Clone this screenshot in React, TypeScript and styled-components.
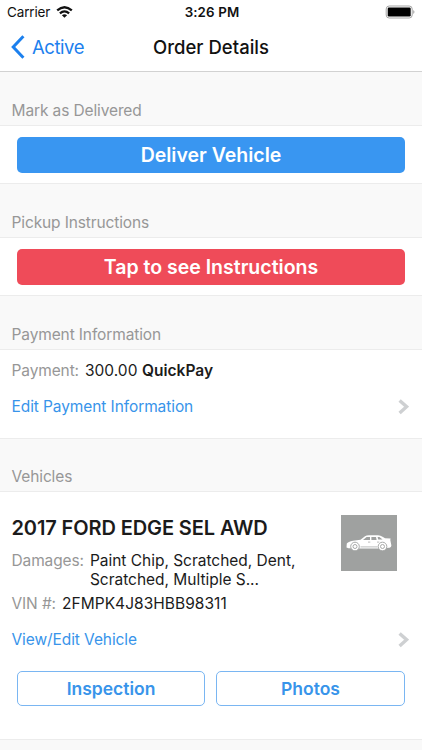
import React from "react";
import styled, { createGlobalStyle } from "styled-components";

const GlobalStyle = createGlobalStyle`
  * { box-sizing: border-box; }
  body {
    margin: 0;
    background: #fff;
    font-family: Inter, "Liberation Sans", sans-serif;
    color: #1b1b1b;
  }
`;

const Screen = styled.div`
  width: 422px;
  height: 750px;
  overflow: hidden;
  display: flex;
  flex-direction: column;
  background: #fff;
`;

const StatusBar = styled.div`
  height: 24px;
  flex: none;
  display: grid;
  grid-template-columns: 1fr auto 1fr;
  align-items: center;
  padding: 0 7px;
  color: #111;
`;

const Carrier = styled.div`
  display: flex;
  align-items: center;
  gap: 6px;
  font-size: 13.5px;
  letter-spacing: -0.15px;
`;

const Clock = styled.div`
  font-size: 13.3px;
  font-weight: 600;
  letter-spacing: 0.15px;
  padding-left: 2px;
`;

const BatterySlot = styled.div`
  display: flex;
  justify-content: flex-end;
`;

const NavBar = styled.div`
  height: 48px;
  flex: none;
  display: grid;
  grid-template-columns: 1fr auto 1fr;
  align-items: center;
  padding: 0 11px 1px;
  border-bottom: 1px solid #d2d2d2;
`;

const BackButton = styled.button`
  display: flex;
  align-items: center;
  gap: 7px;
  border: 0;
  padding: 0;
  background: none;
  color: #1c80ee;
  font: 400 18.5px/24px Inter, sans-serif;
  letter-spacing: -0.45px;
`;

const NavTitle = styled.h1`
  margin: 0;
  font-size: 18.5px;
  line-height: 24px;
  font-weight: 500;
  letter-spacing: 0.02px;
  color: #111;
`;

const SectionHeader = styled.h2<{ $height: number }>`
  margin: 0;
  flex: none;
  height: ${(p) => p.$height}px;
  display: flex;
  align-items: flex-end;
  padding: 0 11.5px 3px;
  background: #f9f9f9;
  border-bottom: 1px solid #ececec;
  color: #979797;
  font-size: 15.5px;
  line-height: 22px;
  font-weight: 400;
  letter-spacing: -0.12px;
`;

const Panel = styled.section<{ $height: number }>`
  flex: none;
  height: ${(p) => p.$height}px;
  padding: 11px 17px 0;
  border-bottom: 1px solid #ececec;
  background: #fff;
`;

const DetailPanel = styled(Panel)`
  padding: 0 12px 0 11.5px;
`;

const ActionButton = styled.button<{ $color: string }>`
  display: block;
  width: 100%;
  height: 35.5px;
  border: 0;
  border-radius: 5px;
  padding: 0;
  background: ${(p) => p.$color};
  color: #fff;
  font: 600 19.5px/36px Inter, sans-serif;
`;

const Field = styled.div<{ $top?: number }>`
  display: flex;
  gap: 6px;
  margin-top: ${(p) => p.$top ?? 0}px;
  font-size: 15.5px;
  line-height: 19px;
`;

const Label = styled.span`
  color: #979797;
  letter-spacing: -0.12px;
`;

const Value = styled.span<{ $spacing?: number }>`
  letter-spacing: ${(p) => p.$spacing ?? -0.02}px;
`;

const Strong = styled.strong`
  font-weight: 600;
`;

const LinkRow = styled.a<{ $top: number }>`
  display: flex;
  justify-content: space-between;
  align-items: center;
  margin-top: ${(p) => p.$top}px;
  margin-right: 1px;
  height: 20px;
  color: #3894ea;
  font-size: 15.5px;
  line-height: 20px;
  letter-spacing: -0.09px;
`;

const VehicleRow = styled.div`
  display: flex;
  justify-content: space-between;
  height: 122px;
`;

const VehicleInfo = styled.div`
  padding-top: 22px;
`;

const VehicleName = styled.h3`
  margin: 0;
  font-size: 20px;
  line-height: 28px;
  font-weight: 600;
  letter-spacing: -0.11px;
  white-space: nowrap;
`;

const Thumbnail = styled.div`
  width: 56px;
  height: 56px;
  margin: 23px 13px 0 0;
  background: #9fa1a0;
  display: flex;
  align-items: center;
  justify-content: center;
`;

const ButtonPair = styled.div`
  display: grid;
  grid-template-columns: 188px 1fr;
  gap: 11px;
  margin: 21px 5px 0 5.5px;
`;

const OutlineButton = styled.button`
  appearance: none;
  height: 35px;
  border: 1px solid #7ab6f2;
  border-radius: 5px;
  padding: 0;
  background: #fff;
  color: #3894ea;
  font: 600 17.5px/33px Inter, sans-serif;
`;

const Footer = styled.div`
  flex: 1;
  background: #f9f9f9;
`;

const WifiIcon = () => (
  <svg width="17" height="12" viewBox="0 0 17 12" fill="none" stroke="#111" strokeWidth="2.3">
    <path d="M1.2 4.4 Q8.5 -2 15.8 4.4" />
    <path d="M3.9 7.4 Q8.5 3.4 13.1 7.4" />
    <path d="M8.5 11.8 L5.9 9.2 Q8.5 7.1 11.1 9.2 Z" fill="#111" stroke="none" />
  </svg>
);

const BatteryIcon = () => (
  <svg width="30" height="14" viewBox="0 0 30 14">
    <rect x="1.2" y="1" width="26" height="12" rx="3" fill="#fff" stroke="#a5a5a5" />
    <rect x="2.7" y="2.6" width="23" height="8.8" rx="1.2" fill="#000" />
    <path d="M28.3 5 Q30.6 7 28.3 9 Z" fill="#999" />
  </svg>
);

const BackIcon = () => (
  <svg width="14" height="24" viewBox="0 0 14 24" fill="none" stroke="#1c80ee" strokeWidth="3">
    <path d="M12.4 1.2 L2.2 12 L12.4 22.8" />
  </svg>
);

const ChevronIcon = () => (
  <svg width="12" height="16" viewBox="0 0 12 16" fill="none" stroke="#ced0d2" strokeWidth="3.4">
    <path d="M2.6 1.4 L9.6 7.7 L2.6 14" />
  </svg>
);

const CarIcon = () => (
  <svg width="46" height="16" viewBox="0 0 46 16">
    <path
      d="M.5 12.5 L.8 8.5 Q2 6.8 7 5.8 L14.5 4.8 L19 1.3 Q20.3 .2 23 .2 H32 Q34.5 .2 37 2 L39 3.3 L44.6 3.6 L44.3 5 L45.4 10.5 Q45.3 12.6 43.5 12.8 L32 13.6 H14 L2.5 13.2 Z"
      fill="#fff"
    />
    <path d="M17 5 L20.6 1.9 H24 V5 Z M25.4 1.9 H30 L30.6 5 H25.4 Z M31.6 1.9 H33.4 L36.6 4.6 H32.2 Z" fill="#9fa1a0" />
    <path d="M22 7.1 h2.3 M31 7.1 h2.3 M14.5 11.9 H31.5" stroke="#9fa1a0" strokeWidth=".7" />
    <g fill="#fff" stroke="#9fa1a0" strokeWidth=".9">
      <circle cx="9" cy="11.5" r="4.3" />
      <circle cx="36.5" cy="11.5" r="4.3" />
      <circle cx="9" cy="11.5" r="2" />
      <circle cx="36.5" cy="11.5" r="2" />
    </g>
  </svg>
);

export default function App() {
  return (
    <>
      <GlobalStyle />
      <Screen>
        <StatusBar>
          <Carrier>
            Carrier <WifiIcon />
          </Carrier>
          <Clock>3:26 PM</Clock>
          <BatterySlot>
            <BatteryIcon />
          </BatterySlot>
        </StatusBar>
        <NavBar>
          <BackButton>
            <BackIcon />
            Active
          </BackButton>
          <NavTitle>Order Details</NavTitle>
        </NavBar>

        <SectionHeader $height={54}>Mark as Delivered</SectionHeader>
        <Panel $height={58}>
          <ActionButton $color="#3996f1">Deliver Vehicle</ActionButton>
        </Panel>

        <SectionHeader $height={54}>Pickup Instructions</SectionHeader>
        <Panel $height={58}>
          <ActionButton $color="#ef4b59">Tap to see Instructions</ActionButton>
        </Panel>

        <SectionHeader $height={54}>Payment Information</SectionHeader>
        <DetailPanel $height={89}>
          <Field $top={11}>
            <Label>Payment:</Label>
            <Value $spacing={0.03}>
              300.00 <Strong>QuickPay</Strong>
            </Value>
          </Field>
          <LinkRow $top={17}>
            Edit Payment Information
            <ChevronIcon />
          </LinkRow>
        </DetailPanel>

        <SectionHeader $height={53}>Vehicles</SectionHeader>
        <DetailPanel $height={248}>
          <VehicleRow>
            <VehicleInfo>
              <VehicleName>2017 FORD EDGE SEL AWD</VehicleName>
              <Field $top={9}>
                <Label>Damages:</Label>
                <Value>
                  Paint Chip, Scratched, Dent,
                  <br />
                  Scratched, Multiple S...
                </Value>
              </Field>
              <Field $top={5}>
                <Label>VIN #:</Label>
                <Value $spacing={0.04}>2FMPK4J83HBB98311</Value>
              </Field>
            </VehicleInfo>
            <Thumbnail>
              <CarIcon />
            </Thumbnail>
          </VehicleRow>
          <LinkRow $top={16}>
            View/Edit Vehicle
            <ChevronIcon />
          </LinkRow>
          <ButtonPair>
            <OutlineButton>Inspection</OutlineButton>
            <OutlineButton>Photos</OutlineButton>
          </ButtonPair>
        </DetailPanel>
        <Footer />
      </Screen>
    </>
  );
}
